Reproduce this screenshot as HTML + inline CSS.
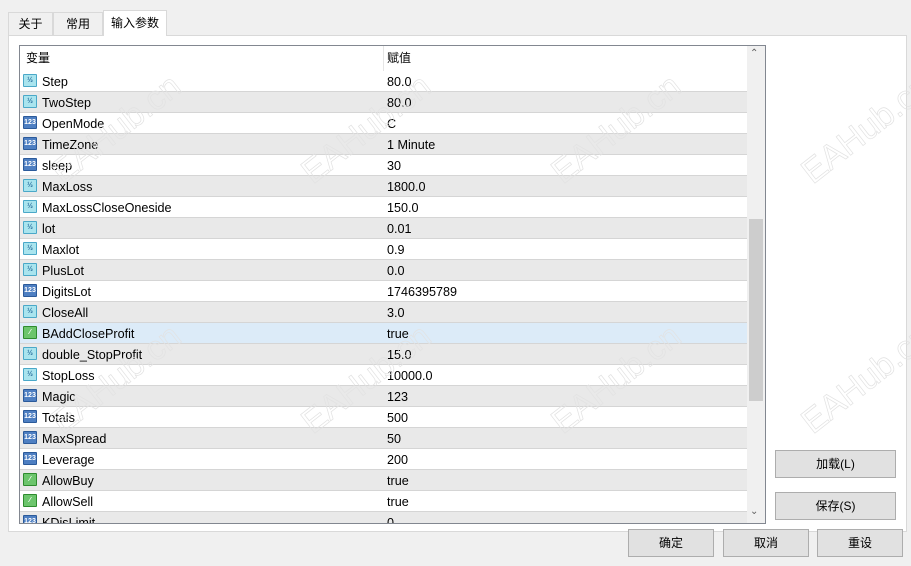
<!DOCTYPE html><html><head><meta charset="utf-8"><style>
body{margin:0;width:911px;height:566px;background:#f0f0f0;font-family:"Liberation Sans","Noto Sans CJK SC",sans-serif;font-size:12px;color:#000;position:relative;overflow:hidden}
.abs{position:absolute}
.tab{position:absolute;top:12px;height:23px;border:1px solid #d9d9d9;border-bottom:none;background:#f0f0f0;line-height:22px;text-align:center;box-sizing:border-box}
.panel{left:8px;top:35px;width:899px;height:497px;background:#fff;border:1px solid #d9d9d9;box-sizing:border-box}
.list{left:19px;top:45px;width:747px;height:479px;border:1px solid #828790;box-sizing:border-box;overflow:hidden;background:#fff}
.row{position:absolute;left:0;width:727px;height:21px;border-bottom:1px solid #d5d5d5;box-sizing:border-box;line-height:22px;font-size:12.6px}
.g{background:#e9e9e9}.s{background:#dcebf8}
.n{position:absolute;left:22px}.v{position:absolute;left:367px}
.ic{position:absolute;left:3px;top:3px;width:14px;height:13px;border-radius:1px;font-size:7px;line-height:11px;text-align:center;font-weight:bold}
.f{background:#a9e4ee;border:1px solid #4aa8c8;box-sizing:border-box;color:#2a6f9e}
.i{background:#4e7fc2;border:1px solid #2b5a9a;box-sizing:border-box;color:#fff}
.b{background:#6cc56c;border:1px solid #2e8b2e;box-sizing:border-box;color:#fff}
.btn{position:absolute;height:28px;background:#e1e1e1;border:1px solid #adadad;box-sizing:border-box;text-align:center;line-height:26px}
.wm{position:absolute;font-size:34px;color:transparent;-webkit-text-stroke:0.7px #e2e2e2;transform:rotate(-38deg);white-space:nowrap;font-family:"Liberation Sans",sans-serif}
</style></head><body>
<div class="tab" style="left:8px;width:45px">关于</div>
<div class="tab" style="left:53px;width:50px">常用</div>
<div class="abs panel"></div>
<div class="tab" style="left:103px;top:10px;height:26px;width:64px;background:#fff;line-height:24px">输入参数</div>
<div class="abs list">
<div class="abs" style="left:6px;top:0;height:25px;line-height:25px">变量</div>
<div class="abs" style="left:367px;top:0;height:25px;line-height:25px">赋值</div>
<div class="abs" style="left:363px;top:0;width:1px;height:25px;background:#e5e5e5"></div>
<div class="row" style="top:25px"><span class="ic f">½</span><span class="n">Step</span><span class="v">80.0</span></div>
<div class="row g" style="top:46px"><span class="ic f">½</span><span class="n">TwoStep</span><span class="v">80.0</span></div>
<div class="row" style="top:67px"><span class="ic i">123</span><span class="n">OpenMode</span><span class="v">C</span></div>
<div class="row g" style="top:88px"><span class="ic i">123</span><span class="n">TimeZone</span><span class="v">1 Minute</span></div>
<div class="row" style="top:109px"><span class="ic i">123</span><span class="n">sleep</span><span class="v">30</span></div>
<div class="row g" style="top:130px"><span class="ic f">½</span><span class="n">MaxLoss</span><span class="v">1800.0</span></div>
<div class="row" style="top:151px"><span class="ic f">½</span><span class="n">MaxLossCloseOneside</span><span class="v">150.0</span></div>
<div class="row g" style="top:172px"><span class="ic f">½</span><span class="n">lot</span><span class="v">0.01</span></div>
<div class="row" style="top:193px"><span class="ic f">½</span><span class="n">Maxlot</span><span class="v">0.9</span></div>
<div class="row g" style="top:214px"><span class="ic f">½</span><span class="n">PlusLot</span><span class="v">0.0</span></div>
<div class="row" style="top:235px"><span class="ic i">123</span><span class="n">DigitsLot</span><span class="v">1746395789</span></div>
<div class="row g" style="top:256px"><span class="ic f">½</span><span class="n">CloseAll</span><span class="v">3.0</span></div>
<div class="row s" style="top:277px"><span class="ic b">⁄</span><span class="n">BAddCloseProfit</span><span class="v">true</span></div>
<div class="row g" style="top:298px"><span class="ic f">½</span><span class="n">double_StopProfit</span><span class="v">15.0</span></div>
<div class="row" style="top:319px"><span class="ic f">½</span><span class="n">StopLoss</span><span class="v">10000.0</span></div>
<div class="row g" style="top:340px"><span class="ic i">123</span><span class="n">Magic</span><span class="v">123</span></div>
<div class="row" style="top:361px"><span class="ic i">123</span><span class="n">Totals</span><span class="v">500</span></div>
<div class="row g" style="top:382px"><span class="ic i">123</span><span class="n">MaxSpread</span><span class="v">50</span></div>
<div class="row" style="top:403px"><span class="ic i">123</span><span class="n">Leverage</span><span class="v">200</span></div>
<div class="row g" style="top:424px"><span class="ic b">⁄</span><span class="n">AllowBuy</span><span class="v">true</span></div>
<div class="row" style="top:445px"><span class="ic b">⁄</span><span class="n">AllowSell</span><span class="v">true</span></div>
<div class="row g" style="top:466px"><span class="ic i">123</span><span class="n">KDisLimit</span><span class="v">0</span></div>
<div class="abs" style="left:727px;top:0;width:18px;height:477px;background:#f0f0f0"></div>
<div class="abs" style="left:730px;top:2px;font-size:10px;color:#606060">⌃</div>
<div class="abs" style="left:729px;top:173px;width:14px;height:182px;background:#cdcdcd"></div>
<div class="abs" style="left:730px;top:460px;font-size:10px;color:#606060">⌄</div>
</div>
<div class="wm" style="left:40px;top:110px">EAHub.cn</div>
<div class="wm" style="left:290px;top:110px">EAHub.cn</div>
<div class="wm" style="left:540px;top:110px">EAHub.cn</div>
<div class="wm" style="left:790px;top:110px">EAHub.cn</div>
<div class="wm" style="left:40px;top:360px">EAHub.cn</div>
<div class="wm" style="left:290px;top:360px">EAHub.cn</div>
<div class="wm" style="left:540px;top:360px">EAHub.cn</div>
<div class="wm" style="left:790px;top:360px">EAHub.cn</div>
<div class="btn" style="left:775px;top:450px;width:121px">加载(L)</div>
<div class="btn" style="left:775px;top:492px;width:121px">保存(S)</div>
<div class="btn" style="left:628px;top:529px;width:86px">确定</div>
<div class="btn" style="left:723px;top:529px;width:86px">取消</div>
<div class="btn" style="left:817px;top:529px;width:86px">重设</div>
</body></html>
